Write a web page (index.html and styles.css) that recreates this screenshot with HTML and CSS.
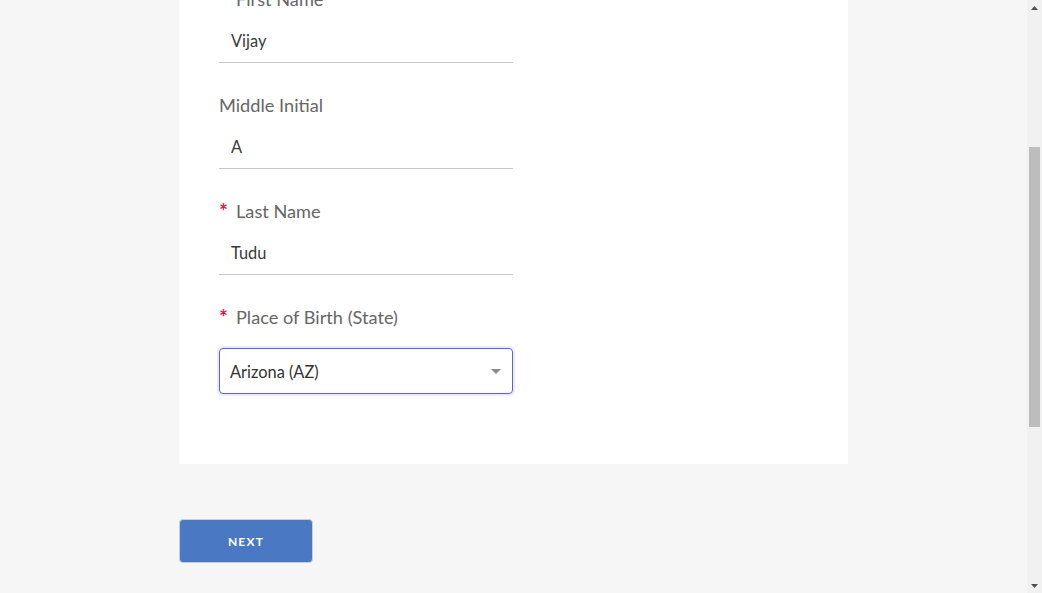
FILE: index.html
```html
<!DOCTYPE html>
<html>
<head>
<meta charset="utf-8">
<link rel="stylesheet" href="styles.css">
</head>
<body>
<div class="viewport">
  <main class="main">
    <section class="card">
      <div class="field">
        <div class="label"><span class="req">*</span>First Name</div>
        <div class="input">Vijay</div>
      </div>
      <div class="field">
        <div class="label">Middle Initial</div>
        <div class="input">A</div>
      </div>
      <div class="field">
        <div class="label"><span class="req">*</span>Last Name</div>
        <div class="input">Tudu</div>
      </div>
      <div class="field">
        <div class="label"><span class="req">*</span>Place of Birth (State)</div>
        <div class="select">
          <span>Arizona (AZ)</span>
          <svg class="caret" width="10" height="5" viewBox="0 0 10 5"><path d="M0 0 L10 0 L5 5 Z" fill="#8a8a8a"/></svg>
        </div>
      </div>
    </section>
    <div class="actions">
      <button class="next">NEXT</button>
    </div>
  </main>
  <aside class="scrollbar">
    <div class="arrow up"><svg width="7" height="4" viewBox="0 0 7 4"><path d="M0 4 L7 4 L3.5 0 Z" fill="#505050"/></svg></div>
    <div class="track"><div class="thumb"></div></div>
    <div class="arrow down"><svg width="7" height="4" viewBox="0 0 7 4"><path d="M0 0 L7 0 L3.5 4 Z" fill="#505050"/></svg></div>
  </aside>
</div>
</body>
</html>
```

FILE: styles.css
```css
* { box-sizing: border-box; }
html, body { margin: 0; padding: 0; }
body {
  font-family: "Lato", "Open Sans", sans-serif;
  background: #f6f6f6;
}
.viewport {
  display: flex;
  height: 593px;
  overflow: hidden;
}
.main {
  flex: 1;
  display: flex;
  flex-direction: column;
  align-items: center;
  overflow: hidden;
}
.card {
  width: 669px;
  background: #ffffff;
  margin-top: -60px;
  padding: 47px 40px 70px;
  display: flex;
  flex-direction: column;
  gap: 30px;
}
.field {
  display: flex;
  flex-direction: column;
  gap: 9px;
  width: 294px;
}
.label {
  font-size: 18.2px;
  line-height: 24px;
  height: 24px;
  color: #666666;
  white-space: nowrap;
}
.req {
  color: #e3173e;
  display: inline-block;
  width: 17px;
  font-size: 21px;
  font-weight: 700;
  vertical-align: top;
  line-height: 24px;
}
.input {
  height: 43px;
  border-bottom: 1px solid #c9c9c9;
  padding-left: 12px;
  line-height: 42px;
  font-size: 16.4px;
  color: #3a3a3a;
}
.select {
  margin-top: 10px;
  height: 46px;
  border: 1px solid #5c5cf0;
  border-radius: 4px;
  box-shadow: 0 0 0 2px rgba(92, 92, 240, 0.12);
  display: flex;
  align-items: center;
  justify-content: space-between;
  padding: 0 11px 0 10px;
  font-size: 16.4px;
  color: #333333;
}
.caret { margin-top: 1px; }
.actions {
  width: 669px;
  padding-top: 55px;
}
.next {
  width: 134px;
  height: 44px;
  background: #4a78c2;
  border: 1px solid #c9cfd8;
  border-radius: 4px;
  color: #ffffff;
  font-family: "Lato", "Open Sans", sans-serif;
  font-weight: 700;
  font-size: 12px;
  letter-spacing: 1.2px;
  padding: 0;
}
.scrollbar {
  width: 15px;
  background: #f1f1f1;
  display: flex;
  flex-direction: column;
}
.arrow {
  height: 15px;
  display: flex;
  align-items: center;
  justify-content: center;
}
.track {
  flex: 1;
  padding: 132px 2px 0;
}
.thumb {
  height: 280px;
  background: #bdbdbd;
}
```
